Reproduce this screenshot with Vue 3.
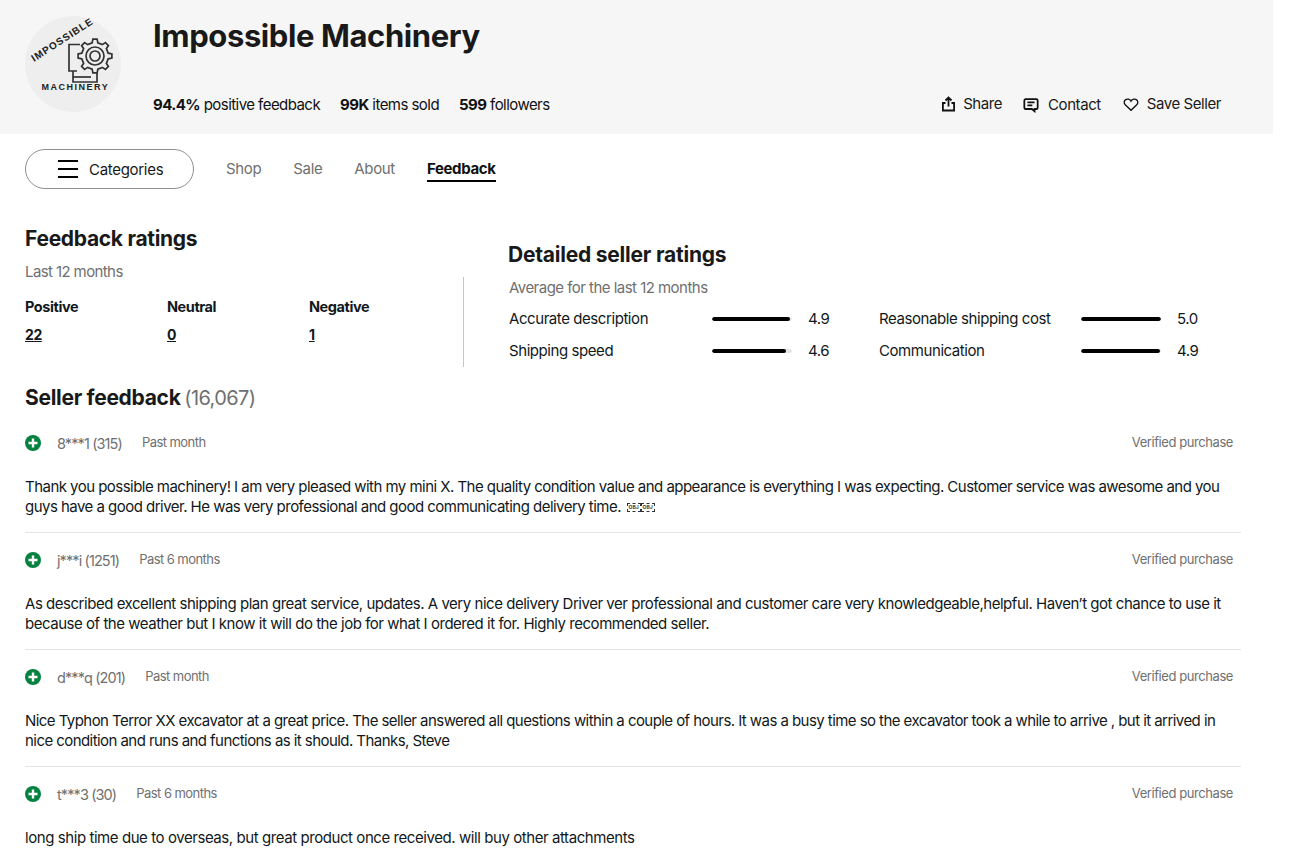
<script setup>
const stats = [
  { value: '94.4%', label: 'positive feedback' },
  { value: '99K', label: 'items sold' },
  { value: '599', label: 'followers' }
]
const tabs = ['Shop', 'Sale', 'About', 'Feedback']
const counts = [
  { label: 'Positive', value: 22 },
  { label: 'Neutral', value: 0 },
  { label: 'Negative', value: 1 }
]
const ratings = [
  { label: 'Accurate description', value: '4.9', pct: 97 },
  { label: 'Reasonable shipping cost', value: '5.0', pct: 100 },
  { label: 'Shipping speed', value: '4.6', pct: 92 },
  { label: 'Communication', value: '4.9', pct: 99 }
]
const reviews = [
  { user: '8***1 (315)', when: 'Past month', obj: true, spacing: -0.53, text: 'Thank you possible machinery! I am very pleased with my mini X. The quality condition value and appearance is everything I was expecting. Customer service was awesome and you guys have a good driver. He was very professional and good communicating delivery time. ' },
  { user: 'j***i (1251)', when: 'Past 6 months', spacing: -0.47, text: 'As described excellent shipping plan great service, updates. A very nice delivery Driver ver professional and customer care very knowledgeable,helpful. Haven’t got chance to use it because of the weather but I know it will do the job for what I ordered it for. Highly recommended seller.' },
  { user: 'd***q (201)', when: 'Past month', spacing: -0.56, text: 'Nice Typhon Terror XX excavator at a great price. The seller answered all questions within a couple of hours. It was a busy time so the excavator took a while to arrive , but it arrived in nice condition and runs and functions as it should. Thanks, Steve' },
  { user: 't***3 (30)', when: 'Past 6 months', spacing: -0.43, text: 'long ship time due to overseas, but great product once received. will buy other attachments' }
]

function gearPath(cx, cy, outer, inner, teeth) {
  const pts = []
  const step = (Math.PI * 2) / teeth
  for (let i = 0; i < teeth; i++) {
    const a = i * step - Math.PI / 2
    const w = step * 0.2
    pts.push([a - w * 1.35, inner], [a - w * 0.8, outer], [a + w * 0.8, outer], [a + w * 1.35, inner])
  }
  return pts
    .map(([a, r], i) => `${i ? 'L' : 'M'}${(cx + r * Math.cos(a)).toFixed(2)} ${(cy + r * Math.sin(a)).toFixed(2)}`)
    .join('') + 'Z'
}
const gear = gearPath(70, 40, 17, 13.5, 8)
</script>

<template>
  <div class="page">
    <header class="hero">
      <svg class="logo" viewBox="0 0 96 96" width="96" height="96">
        <circle cx="48" cy="48" r="48" fill="#eeeeee" />
        <text class="logo-top" transform="translate(9 46) rotate(-33)">IMPOSSIBLE</text>
        <text class="logo-bottom" x="16.500" y="74">MACHINERY</text>
        <g fill="none" stroke="#333" stroke-width="1.700">
          <path d="M55 28.500H44V55H52" />
          <path d="M48 55V66H72V57" />
          <path d="M48 61H66" />
          <path :d="gear" />
          <circle cx="70" cy="40" r="9" />
          <circle cx="70" cy="40" r="5" />
        </g>
      </svg>
      <div class="hero-main">
        <h1 class="title">Impossible Machinery</h1>
        <div class="hero-row">
          <ul class="stats">
            <li v-for="s in stats" :key="s.label"><b>{{ s.value }}</b> {{ s.label }}</li>
          </ul>
          <div class="actions">
            <span class="action share">
              <svg viewBox="0 0 16 16" width="16" height="16"><path d="M8.500 10.500V1.500M5.500 4.500l3-3 3 3M5.500 7H2.900v7.500h11.200V7H11.500" fill="none" stroke="#111" stroke-width="1.800" /></svg>
              Share
            </span>
            <span class="action contact">
              <svg viewBox="0 0 18 18" width="16" height="16"><path d="M3 2.500h12a1.500 1.500 0 0 1 1.500 1.500v8a1.500 1.500 0 0 1-1.500 1.500h-2v2.500l-3-2.500H3A1.500 1.500 0 0 1 1.500 12V4A1.500 1.500 0 0 1 3 2.500zM5 6h8M5 9.500h5.500" fill="none" stroke="#111" stroke-width="2" /></svg>
              Contact
            </span>
            <span class="action">
              <svg viewBox="0 0 18 16" width="16" height="15"><path d="M9 14.500 2.500 8.200C.8 6.500 1 3.800 3 2.500c1.900-1.200 4.500-.6 6 1.800 1.500-2.400 4.100-3 6-1.800 2 1.300 2.200 4 .5 5.700z" fill="none" stroke="#111" stroke-width="1.500" /></svg>
              Save Seller
            </span>
          </div>
        </div>
      </div>
    </header>

    <nav class="nav">
      <button class="cat" type="button">
        <span class="burger"><i></i><i></i><i></i></span>
        Categories
      </button>
      <a v-for="t in tabs" :key="t" class="tab" :class="{ active: t === 'Feedback' }">{{ t }}</a>
    </nav>

    <section class="summary">
      <div class="left">
        <h2 class="h2">Feedback ratings</h2>
        <p class="muted">Last 12 months</p>
        <div class="counts">
          <div v-for="c in counts" :key="c.label" class="count">
            <div class="count-label">{{ c.label }}</div>
            <div class="count-value">{{ c.value }}</div>
          </div>
        </div>
      </div>
      <div class="right">
        <h2 class="h2">Detailed seller ratings</h2>
        <p class="muted">Average for the last 12 months</p>
        <div class="rating-grid">
          <div v-for="r in ratings" :key="r.label" class="rating">
            <span class="rating-label">{{ r.label }}</span>
            <span class="bar"><span class="fill" :style="{ width: r.pct + '%' }"></span></span>
            <span class="rating-value">{{ r.value }}</span>
          </div>
        </div>
      </div>
    </section>

    <section class="feedback">
      <h2 class="h2 fb-title">Seller feedback <span class="total">(16,067)</span></h2>
      <article v-for="r in reviews" :key="r.user" class="review">
        <div class="review-head">
          <svg class="plus" viewBox="0 0 16 16" width="16" height="16"><circle cx="8" cy="8" r="8" fill="#05823f" /><path d="M8 3.500v9M3.500 8h9" stroke="#fff" stroke-width="2.400" /></svg>
          <span class="user">{{ r.user }}</span>
          <span class="when">{{ r.when }}</span>
          <span class="verified">Verified purchase</span>
        </div>
        <p class="text" :style="{ letterSpacing: r.spacing + 'px' }">{{ r.text }}<span v-if="r.obj" class="obj"><span class="obj-box">OBJ</span><span class="obj-box">OBJ</span></span></p>
      </article>
    </section>
  </div>
</template>

<style>
html, body { background: #fff; overflow: hidden; }
</style>

<style scoped>
.page {
  width: 1273px;
  height: 863px;
  overflow: hidden;
  font-family: Inter, "Liberation Sans", sans-serif;
  font-size: 15px;
  letter-spacing: -0.43px;
  color: #111820;
}
.hero {
  height: 134px;
  box-sizing: border-box;
  background: #f6f6f6;
  padding: 16px 52px 0 25px;
  display: flex;
  gap: 32px;
}
.logo { flex: none; }
.logo-top { font: 700 10px "Liberation Sans", sans-serif; letter-spacing: 1px; fill: #222; }
.logo-bottom { font: 700 9px "Liberation Sans", sans-serif; letter-spacing: 1.500px; fill: #222; }
.hero-main { flex: 1; }
.title {
  margin: 1px 0 0;
  font-size: 31px;
  line-height: 37px;
  font-weight: 700;
  letter-spacing: -0.4px;
  color: #191919;
}
.hero-row {
  margin-top: 40px;
  display: flex;
  justify-content: space-between;
  align-items: center;
}
.stats { display: flex; gap: 20px; list-style: none; margin: 0; padding: 0; line-height: 20px; color: #111; letter-spacing: -0.55px; }
.stats b { font-weight: 700; }
.actions { display: flex; gap: 21px; line-height: 20px; color: #191919; margin-bottom: 2px; }
.action { display: flex; align-items: center; gap: 8px; }
.share { gap: 7px; }
.contact { position: relative; top: 1px; gap: 9px; margin-right: 1px; }
.nav {
  height: 40px;
  margin: 15px 0 0 25px;
  display: flex;
  align-items: center;
  gap: 32px;
  letter-spacing: -0.35px;
}
.cat {
  width: 169px;
  height: 40px;
  padding: 0 0 0 32px;
  box-sizing: border-box;
  display: flex;
  align-items: center;
  gap: 11px;
  border: 1px solid #8f8f8f;
  border-radius: 20px;
  background: #fff;
  font: inherit;
  letter-spacing: -0.3px;
  color: #191919;
}
.burger { display: flex; flex-direction: column; gap: 6px; width: 20px; }
.burger i { height: 2px; background: #000; display: block; }
.tab { color: #707070; line-height: 20px; }
.tab.active {
  color: #111;
  font-weight: 700;
  border-bottom: 2px solid #000;
  line-height: 20px;
  margin-top: 3px;
  padding-bottom: 1px;
}
.summary {
  display: flex;
  padding-left: 25px;
  margin-top: 36px;
  height: 143px;
}
.left { width: 438px; box-sizing: border-box; position: relative; flex: none; }
.left::after {
  content: "";
  position: absolute;
  left: 438px;
  top: 52px;
  width: 1px;
  height: 90px;
  background: #c7c7c7;
}
.h2 {
  margin: 0;
  font-size: 21px;
  line-height: 28px;
  font-weight: 700;
  letter-spacing: -0.3px;
  color: #191919;
}
.muted { margin: 9px 0 0; line-height: 20px; color: #707070; letter-spacing: -0.6px; }
.right .muted { margin-left: 1px; letter-spacing: -0.53px; }
.counts { display: flex; margin-top: 15px; }
.count { width: 142px; }
.count-label { font-weight: 700; font-size: 14.500px; line-height: 20px; }
.count-value { margin-top: 8px; font-weight: 700; font-size: 14px; line-height: 20px; text-decoration: underline; }
.right { margin-left: 45px; padding-top: 16px; flex: 1; }
.right .h2 { letter-spacing: -0.22px; }
.rating-grid {
  display: grid;
  grid-template-columns: 370px 340px;
  margin-top: 5px;
  padding-left: 1px;
}
.rating { display: flex; align-items: center; height: 32px; }
.rating-label { width: 203px; flex: none; margin-bottom: 1px; }
.rating:nth-child(even) .rating-label { width: 202px; }
.bar { width: 80px; height: 4px; border-radius: 2px; background: #e5e5e5; overflow: hidden; flex: none; }
.fill { display: block; height: 100%; background: #000; border-radius: 2px; }
.rating-value { margin-left: 16px; margin-bottom: 1px; }
.feedback { padding-left: 25px; margin-top: 16px; width: 1216px; }
.fb-title { margin-bottom: 4px; }
.total { font-weight: 400; color: #707070; font-size: 20px; letter-spacing: -0.6px; margin-left: -1px; }
.review {
  height: 117px;
  box-sizing: border-box;
  padding-top: 17px;
  border-bottom: 1px solid #e5e5e5;
}
.review-head {
  display: flex;
  align-items: center;
  height: 20px;
  padding-right: 8px;
}
.plus { flex: none; }
.user { margin-left: 16px; color: #707070; font-size: 14.500px; letter-spacing: -0.9px; }
.when { margin-left: 20px; margin-bottom: 2px; font-size: 13px; letter-spacing: -0.55px; color: #707070; }
.verified { margin-left: auto; margin-bottom: 2px; font-size: 13px; color: #707070; }
.text { margin: 24px 0 0; line-height: 20px; color: #111820; }
.obj { display: inline-flex; vertical-align: 3px; margin-left: 2px; }
.obj-box { box-sizing: border-box; height: 9px; width: 14px; border: 1px dashed #333; font-size: 5px; line-height: 7px; letter-spacing: 0; text-align: center; color: #333; font-weight: 700; overflow: hidden; }
</style>
